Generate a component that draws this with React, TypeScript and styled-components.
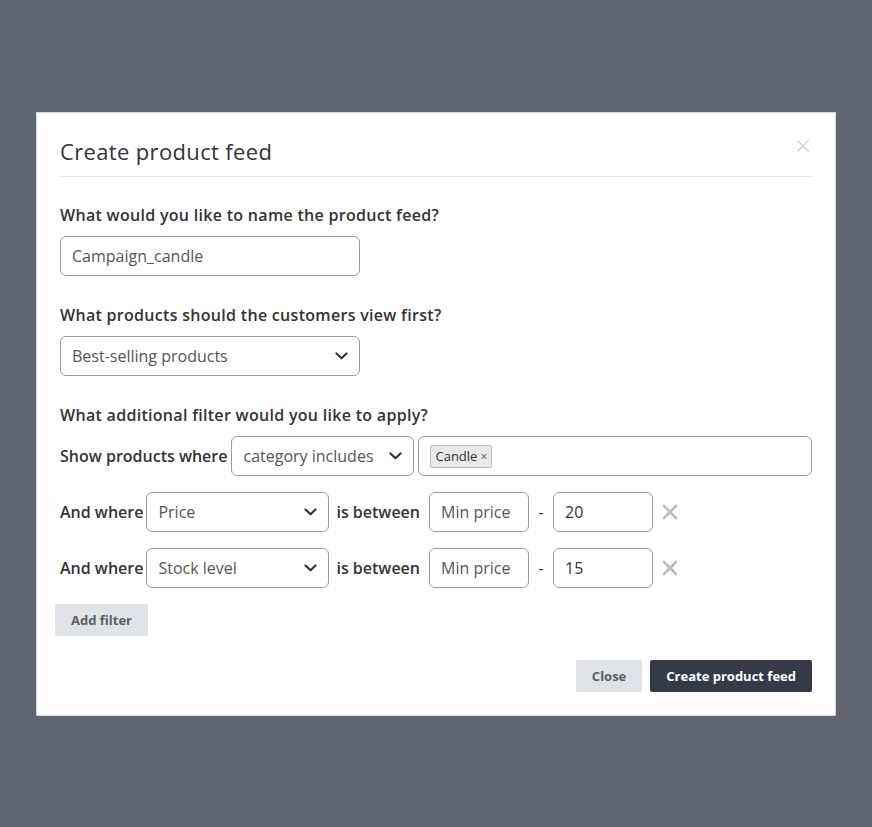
import React from "react"
import styled, { createGlobalStyle } from "styled-components"

const GlobalStyle = createGlobalStyle`
  html, body {
    margin: 0;
    padding: 0;
    background: #5f6670;
  }
  body {
    font-family: "Open Sans", "Liberation Sans", sans-serif;
    color: #333;
  }
`

const Page = styled.div`
  min-height: 100vh;
  display: flex;
  justify-content: center;
  align-items: flex-start;
  padding-top: 112px;
  box-sizing: border-box;
`

const Modal = styled.div`
  width: 800px;
  box-sizing: border-box;
  background: #fff;
  border: 1px solid #d6d9dd;
  padding: 23px 23px 23px;
`

const Header = styled.div`
  display: flex;
  justify-content: space-between;
  align-items: flex-start;
  padding-bottom: 10px;
  border-bottom: 1px solid #e2e2e2;
`

const Title = styled.h2`
  margin: 0;
  font-size: 22px;
  line-height: 30px;
  font-weight: 400;
  letter-spacing: 0.35px;
  color: #333;
`

const CloseIcon = styled.button`
  border: none;
  background: none;
  padding: 0;
  margin: 3px 2px 0 0;
  width: 14px;
  height: 14px;
  cursor: pointer;
  display: flex;
`

const Section = styled.div<{ $top: number }>`
  margin-top: ${(p) => p.$top}px;
  display: flex;
  flex-direction: column;
  gap: 10px;
`

const Label = styled.div`
  font-size: 16px;
  line-height: 22px;
  font-weight: 600;
  letter-spacing: 0.3px;
  color: #333;
`

const Field = styled.div<{ $width?: number; $dark?: boolean }>`
  width: ${(p) => (p.$width ? `${p.$width}px` : "auto")};
  flex: ${(p) => (p.$width ? "0 0 auto" : "1 1 auto")};
  height: 40px;
  box-sizing: border-box;
  border: 1px solid #9a9a9a;
  border-radius: 6px;
  background: #fff;
  display: flex;
  align-items: center;
  justify-content: space-between;
  padding: 0 11px;
  font-size: 16px;
  color: ${(p) => (p.$dark ? "#333" : "#555")};
`

const TagField = styled(Field)`
  margin-left: 4px;
  justify-content: flex-start;
`

const Row = styled.div`
  display: flex;
  align-items: center;
`

const FilterRows = styled.div`
  display: flex;
  flex-direction: column;
  gap: 16px;
`

const RowText = styled.span<{ $gapLeft?: number; $gapRight: number }>`
  font-size: 16px;
  font-weight: 600;
  color: #333;
  margin-left: ${(p) => p.$gapLeft || 0}px;
  margin-right: ${(p) => p.$gapRight}px;
  white-space: nowrap;
`

const Dash = styled.span`
  font-size: 16px;
  color: #333;
  width: 24px;
  text-align: center;
`

const Tag = styled.span`
  display: inline-flex;
  align-items: center;
  gap: 3px;
  height: 23px;
  box-sizing: border-box;
  padding: 0 4px;
  background: #e9e9e9;
  border: 1px solid #bdbdbd;
  border-radius: 2px;
  font-size: 13px;
  color: #333;
`

const TagX = styled.span`
  font-size: 12px;
  color: #555;
`

const RemoveButton = styled.button`
  border: none;
  background: none;
  padding: 0;
  margin-left: 9px;
  width: 16px;
  height: 16px;
  display: flex;
  cursor: pointer;
`

const Button = styled.button<{ $primary?: boolean }>`
  height: 32px;
  border: none;
  border-radius: 2px;
  padding: 0 16px;
  font-family: inherit;
  font-size: 13px;
  font-weight: 700;
  background: ${(p) => (p.$primary ? "#343a46" : "#dfe2e6")};
  color: ${(p) => (p.$primary ? "#fff" : "#5a6068")};
  cursor: pointer;
`

const AddFilter = styled(Button)`
  align-self: flex-start;
  margin: 6px 0 0 -5px;
`

const Footer = styled.div`
  display: flex;
  justify-content: flex-end;
  gap: 8px;
  margin-top: 24px;
`

const Chevron = () => (
  <svg width="13" height="8" viewBox="0 0 13 8">
    <path d="M1.5 1.5 L6.5 6.2 L11.5 1.5" fill="none" stroke="#333" strokeWidth="2.2" strokeLinecap="round" strokeLinejoin="round" />
  </svg>
)

const Cross = ({ size, color, width }: { size: number; color: string; width: number }) => (
  <svg width={size} height={size} viewBox="0 0 16 16">
    <path d="M2 2 L14 14 M14 2 L2 14" stroke={color} strokeWidth={width} strokeLinecap="round" />
  </svg>
)

const Select = ({ value, width }: { value: string; width: number }) => (
  <Field $width={width}>
    <span>{value}</span>
    <Chevron />
  </Field>
)

const filters = [
  { field: "Price", max: "20" },
  { field: "Stock level", max: "15" },
]

const App = () => {
  return (
    <>
      <GlobalStyle />
      <Page>
        <Modal>
          <Header>
            <Title>Create product feed</Title>
            <CloseIcon aria-label="Close">
              <Cross size={14} color="#cfcfcf" width={1.6} />
            </CloseIcon>
          </Header>

          <Section $top={27}>
            <Label>What would you like to name the product feed?</Label>
            <Field $width={300}>Campaign_candle</Field>
          </Section>

          <Section $top={28}>
            <Label>What products should the customers view first?</Label>
            <Select value="Best-selling products" width={300} />
          </Section>

          <Section $top={28}>
            <Label>What additional filter would you like to apply?</Label>
            <FilterRows>
              <Row>
                <RowText $gapRight={4}>Show products where</RowText>
                <Select value="category includes" width={183} />
                <TagField>
                  <Tag>
                    Candle<TagX>×</TagX>
                  </Tag>
                </TagField>
              </Row>
              {filters.map((f) => (
                <Row key={f.field}>
                  <RowText $gapRight={3}>And where</RowText>
                  <Select value={f.field} width={183} />
                  <RowText $gapLeft={7} $gapRight={9}>is between</RowText>
                  <Field $width={100}>Min price</Field>
                  <Dash>-</Dash>
                  <Field $width={100} $dark>{f.max}</Field>
                  <RemoveButton aria-label="Remove filter">
                    <Cross size={16} color="#bdbdbd" width={2.6} />
                  </RemoveButton>
                </Row>
              ))}
            </FilterRows>
            <AddFilter>Add filter</AddFilter>
          </Section>

          <Footer>
            <Button>Close</Button>
            <Button $primary>Create product feed</Button>
          </Footer>
        </Modal>
      </Page>
    </>
  )
}

export default App
